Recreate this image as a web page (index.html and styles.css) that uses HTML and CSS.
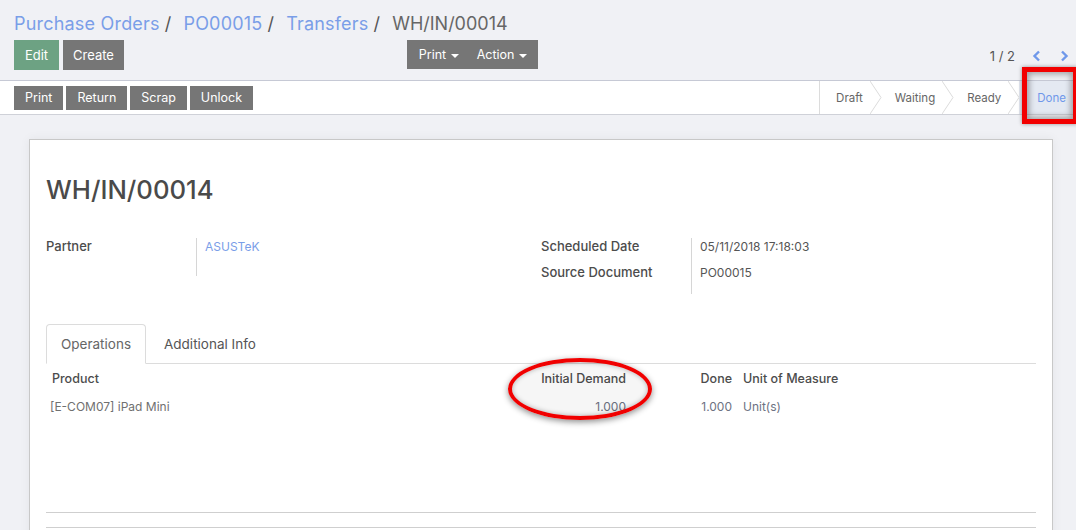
FILE: index.html
```html
<!DOCTYPE html>
<html>
<head>
<meta charset="utf-8">
<link rel="stylesheet" href="styles.css">
</head>
<body>
<div class="page">
  <div class="cp">
    <div class="breadcrumb">
      <a class="crumb">Purchase Orders</a><span class="sep">/</span>
      <a class="crumb">PO00015</a><span class="sep">/</span>
      <a class="crumb">Transfers</a><span class="sep">/</span>
      <span class="crumb-active">WH/IN/00014</span>
    </div>
    <div class="cp-row">
      <div class="cp-left">
        <div class="btns">
          <button class="btn btn-primary">Edit</button>
          <button class="btn btn-create">Create</button>
        </div>
        <div class="btn-group">
          <button class="btn">Print <span class="caret"></span></button>
          <button class="btn">Action <span class="caret"></span></button>
        </div>
      </div>
      <div class="cp-right">
        <span class="pager-val">1 / 2</span>
        <span class="pager-btn"><svg width="9" height="12" viewBox="0 0 9 12"><path d="M7 1.5 L2.5 6 L7 10.5" fill="none" stroke="#6f98ea" stroke-width="2.4"/></svg></span>
        <span class="pager-btn"><svg width="9" height="12" viewBox="0 0 9 12"><path d="M2 1.5 L6.5 6 L2 10.5" fill="none" stroke="#6f98ea" stroke-width="2.4"/></svg></span>
      </div>
    </div>
  </div>

  <div class="statusrow">
    <div class="sbtns">
      <button class="btn btn-sm">Print</button>
      <button class="btn btn-sm">Return</button>
      <button class="btn btn-sm">Scrap</button>
      <button class="btn btn-sm">Unlock</button>
    </div>
    <div class="statusbar">
      <span class="st st-first">Draft<svg class="chev" width="12" height="33" viewBox="0 0 12 33"><polyline points="0,0 11,16.5 0,33" fill="none" stroke="#dcdcdc" stroke-width="1"/></svg></span>
      <span class="st">Waiting<svg class="chev" width="12" height="33" viewBox="0 0 12 33"><polyline points="0,0 11,16.5 0,33" fill="none" stroke="#dcdcdc" stroke-width="1"/></svg></span>
      <span class="st">Ready<svg class="chev" width="12" height="33" viewBox="0 0 12 33"><polyline points="0,0 11,16.5 0,33" fill="none" stroke="#dcdcdc" stroke-width="1"/></svg></span>
      <span class="st st-current">Done</span>
    </div>
    <div class="mark-rect"></div>
  </div>

  <div class="sheet-wrap">
    <div class="sheet">
      <h1 class="title">WH/IN/00014</h1>
      <div class="groups">
        <div class="group">
          <div class="row row-tall">
            <div class="label">Partner</div>
            <div class="value"><a class="link">ASUSTeK</a></div>
          </div>
        </div>
        <div class="group">
          <div class="row">
            <div class="label">Scheduled Date</div>
            <div class="value">05/11/2018 17:18:03</div>
          </div>
          <div class="row row-last">
            <div class="label">Source Document</div>
            <div class="value">PO00015</div>
          </div>
        </div>
      </div>

      <div class="tabs">
        <span class="tab tab-active">Operations</span>
        <span class="tab">Additional Info</span>
      </div>

      <div class="table">
        <div class="tr th">
          <div class="c c-prod">Product</div>
          <div class="c c-num">Initial Demand</div>
          <div class="c c-done">Done</div>
          <div class="c c-uom">Unit of Measure</div>
        </div>
        <div class="tr td">
          <div class="c c-prod">[E-COM07] iPad Mini</div>
          <div class="c c-num">1.000</div>
          <div class="c c-done">1.000</div>
          <div class="c c-uom">Unit(s)</div>
        </div>
        <div class="mark-ellipse"></div>
      </div>
      <div class="foot-lines">
        <div class="fl"></div>
      </div>
    </div>
  </div>
</div>
</body>
</html>
```
FILE: styles.css
```css
* { box-sizing: border-box; }
html, body { margin: 0; padding: 0; }
body {
  width: 1076px;
  height: 530px;
  overflow: hidden;
  background: #f0f1f5;
  font-family: Inter, "Open Sans", "Liberation Sans", sans-serif;
  color: #4c4c4c;
  font-size: 13px;
}
.page { position: relative; }

.cp {
  height: 81px;
  padding: 0 14px;
  border-bottom: 1px solid #c6c9d5;
}
.breadcrumb {
  height: 40px;
  display: flex;
  align-items: center;
  font-size: 18px;
  letter-spacing: 0.2px;
  padding-top: 6px;
}
.crumb { color: #7a9ee8; }
.sep { color: #555; margin: 0 12px 0 5px; }
.crumb-active { color: #666; letter-spacing: 0; }

.cp-row { display: flex; height: 30px; }
.cp-left { width: 50%; display: flex; justify-content: space-between; }
.btns { display: flex; gap: 4px; }
.btn {
  border: none;
  background: #767676;
  color: #fff;
  font-family: inherit;
  font-size: 13px;
  height: 30px;
  padding: 0 12px;
  margin: 0;
  cursor: pointer;
}
.btn-primary { background: #6da283; width: 45px; padding: 0; }
.btn-create { width: 61px; padding: 0; }
.btn-group { display: flex; height: 29px; }
.btn-group .btn { height: 29px; padding: 0 9px; font-size: 12.5px; }
.btn-group .btn:first-child { padding-left: 12px; }
.btn-group .btn:last-child { padding-right: 11px; }
.caret {
  display: inline-block;
  width: 0; height: 0;
  border-left: 4px solid transparent;
  border-right: 4px solid transparent;
  border-top: 4px solid #fff;
  vertical-align: middle;
  margin-left: 1px;
}
.cp-right {
  flex: 1;
  display: flex;
  justify-content: flex-end;
  align-items: center;
  padding-top: 1px;
  margin-right: -8px;
}
.pager-val { color: #555; font-size: 13px; margin-right: 15px; }
.pager-btn { display: flex; width: 12px; justify-content: center; }
.pager-btn + .pager-btn { margin-left: 16px; }

.statusrow {
  position: relative;
  height: 34px;
  background: #fff;
  border-bottom: 1px solid #cfd1d8;
  display: flex;
  justify-content: space-between;
}
.sbtns { display: flex; gap: 3px; padding-left: 14px; align-items: center; }
.btn-sm { height: 24px; font-size: 12.5px; padding: 0 11px; }
.statusbar { display: flex; height: 33px; border-left: 1px solid #dcdcdc; }
.st {
  position: relative;
  display: flex;
  align-items: center;
  padding: 0 18px 0 14px;
  color: #666;
  font-size: 11.5px;
}
.st-first { padding-left: 16px; }
.chev { position: absolute; right: -1px; top: 0; }
.st-current { background: #e4e9f2; color: #6f98ea; padding: 0 10px 0 18px; }
.mark-rect {
  position: absolute;
  left: 1022px;
  top: -14px;
  width: 56px;
  height: 57px;
  border: 5px solid #f20000;
  box-shadow: inset 0 0 6px 2px rgba(0,0,0,0.35), 0 0 4px rgba(0,0,0,0.4);
}

.sheet-wrap { padding: 24px 23px 0 29px; }
.sheet {
  background: #fff;
  border: 1px solid #c8c8c8;
  box-shadow: 0 0 10px rgba(0,0,0,0.06);
  padding: 33px 16px 0 16px;
  height: 420px;
}
.title {
  margin: 0;
  font-size: 25.7px;
  font-weight: 500;
  line-height: 34px;
  color: #4a4a4a;
}
.groups { display: flex; margin-top: 31px; }
.group { width: 50%; }
.row { display: flex; height: 26px; }
.row-tall { height: 38px; }
.row-last { height: 30px; }
.label {
  width: 150px;
  font-weight: 500;
  font-size: 13px;
  line-height: 16px;
  color: #4c4c4c;
}
.value {
  border-left: 1px solid #d6d6d6;
  padding-left: 8px;
  font-size: 12px;
  line-height: 18px;
  color: #555;
}
.link { color: #7a9ee8; }

.tabs {
  display: flex;
  gap: 3px;
  margin-top: 30px;
  height: 40px;
  border-bottom: 1px solid #dcdcdc;
}
.tab {
  display: flex;
  align-items: center;
  padding: 0 14px;
  font-size: 13.5px;
  color: #555;
  height: 40px;
  border: 1px solid transparent;
  border-radius: 4px 4px 0 0;
}
.tab-active {
  border-color: #dcdcdc;
  border-bottom-color: #fff;
  background: #fff;
  color: #666;
  height: 40px;
}

.table { position: relative; }
.tr { display: flex; }
.th { height: 27px; align-items: center; font-weight: 500; color: #4c4c4c; font-size: 12.5px; padding-top: 1px; }
.td { height: 30px; align-items: center; color: #6d7282; font-size: 12px; }
.c-prod { width: 454px; padding-left: 6px; }
.td .c-prod { padding-left: 4px; color: #707070; }
.c-num { width: 130px; text-align: right; padding-right: 4px; }
.c-done { width: 106px; text-align: right; padding-right: 4px; }
.c-uom { width: 300px; padding-left: 7px; }
.mark-ellipse {
  position: absolute;
  left: 462px;
  top: -6px;
  width: 144px;
  height: 62px;
  border: 4px solid #f00000;
  border-radius: 50%;
  background: rgba(0,0,0,0.035);
  box-shadow: 0 2px 6px rgba(0,0,0,0.45), inset 0 0 5px rgba(0,0,0,0.3);
}
.foot-lines { margin-top: 91px; }
.fl { height: 16px; border-top: 1px solid #cfcfcf; border-bottom: 1px solid #cfcfcf; }
```
